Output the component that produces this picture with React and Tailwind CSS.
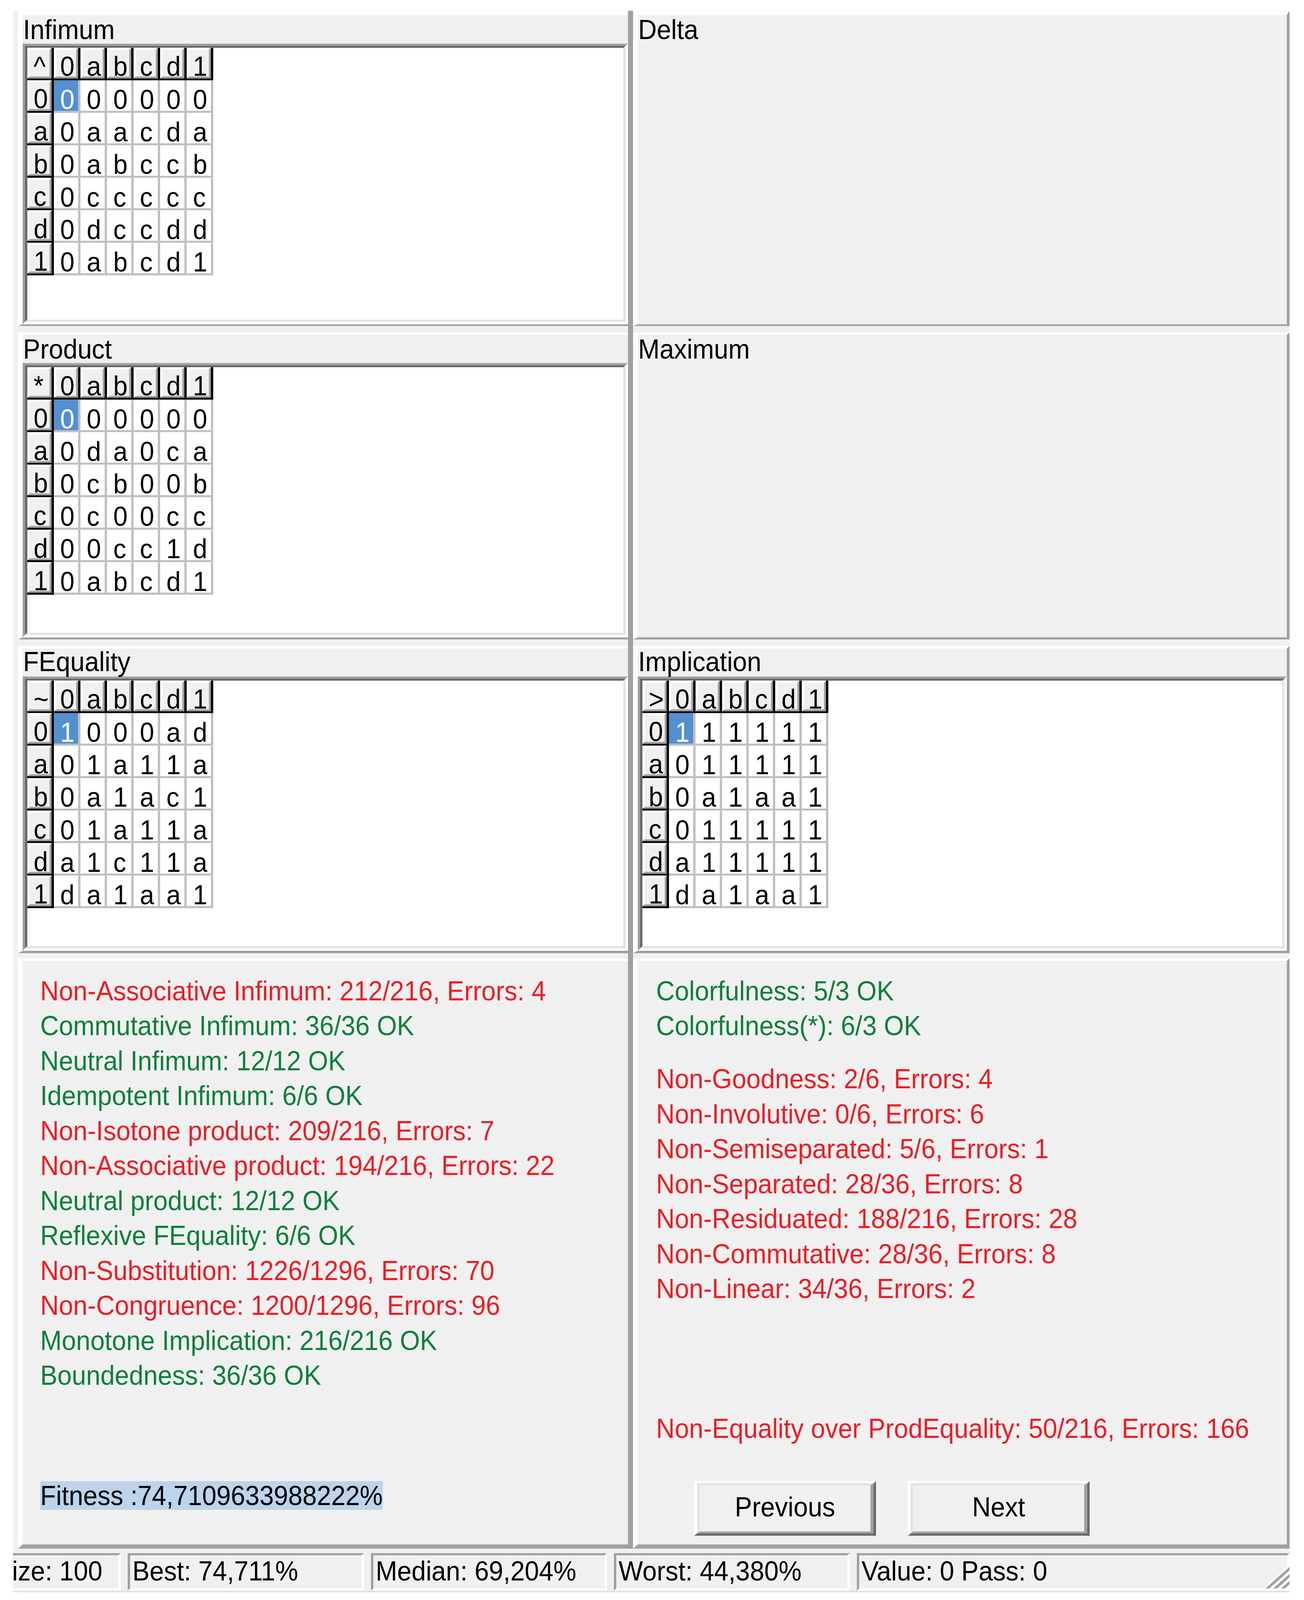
const COLS = ["0", "a", "b", "c", "d", "1"];

const tables = {
  infimum: {
    sym: "^",
    rows: ["000000", "0aacda", "0abccb", "0ccccc", "0dccdd", "0abcd1"],
  },
  product: {
    sym: "*",
    rows: ["000000", "0da0ca", "0cb00b", "0c00cc", "00cc1d", "0abcd1"],
  },
  fequality: {
    sym: "~",
    rows: ["1000ad", "01a11a", "0a1ac1", "01a11a", "a1c11a", "da1aa1"],
  },
  implication: {
    sym: ">",
    rows: ["111111", "011111", "0a1aa1", "011111", "a11111", "da1aa1"],
  },
};

const leftChecks = [
  ["r", "Non-Associative Infimum: 212/216, Errors: 4"],
  ["g", "Commutative Infimum: 36/36 OK"],
  ["g", "Neutral Infimum: 12/12 OK"],
  ["g", "Idempotent Infimum: 6/6 OK"],
  ["r", "Non-Isotone product: 209/216, Errors: 7"],
  ["r", "Non-Associative product: 194/216, Errors: 22"],
  ["g", "Neutral product: 12/12 OK"],
  ["g", "Reflexive FEquality: 6/6 OK"],
  ["r", "Non-Substitution: 1226/1296, Errors: 70"],
  ["r", "Non-Congruence: 1200/1296, Errors: 96"],
  ["g", "Monotone Implication: 216/216 OK"],
  ["g", "Boundedness: 36/36 OK"],
];

const rightChecks = [
  "Non-Goodness: 2/6, Errors: 4",
  "Non-Involutive: 0/6, Errors: 6",
  "Non-Semiseparated: 5/6, Errors: 1",
  "Non-Separated: 28/36, Errors: 8",
  "Non-Residuated: 188/216, Errors: 28",
  "Non-Commutative: 28/36, Errors: 8",
  "Non-Linear: 34/36, Errors: 2",
];

const DESIGN_H = 4579;

// the old MS Sans Serif look is tall and narrow: stretch glyphs up from the baseline
function T({ children }) {
  return <span className="inline-block leading-none whitespace-nowrap origin-[0_56px] scale-y-[1.2]">{children}</span>;
}

function Head({ children }) {
  return (
    <div className="w-[68px] h-[93px] shrink-0 border-r-[6px] border-b-[6px] border-[#050505]">
      <div className="h-full border-l-[6px] border-t-[6px] border-r-[5px] border-b-[5px] border-l-white border-t-white border-r-[#a0a0a0] border-b-[#a0a0a0] bg-[#f0f0f0] pl-[10px] pt-[18px] leading-none">
        <T>{children}</T>
      </div>
    </div>
  );
}

function Cell({ value, selected }) {
  return (
    <div
      className={
        "w-[68px] h-[93px] shrink-0 border-r-[6px] border-b-[6px] border-[#c0c0c0] pl-[16px] pt-[26px] leading-none " +
        (selected ? "bg-[#5390d0] text-white" : "bg-white")
      }
    >
      <T>{value}</T>
    </div>
  );
}

function Grid({ data }) {
  return (
    <div className="flex flex-col w-max">
      <div className="flex">
        <Head>{data.sym}</Head>
        {COLS.map((c) => (
          <Head key={c}>{c}</Head>
        ))}
      </div>
      {data.rows.map((row, i) => (
        <div key={i} className="flex">
          <Head>{COLS[i]}</Head>
          {row.split("").map((v, j) => (
            <Cell key={j} value={v} selected={i === 0 && j === 0} />
          ))}
        </div>
      ))}
    </div>
  );
}

// sunken white box holding a grid
function GridBox({ data }) {
  return (
    <div className="flex-1 flex flex-col border-t-[6px] border-l-[6px] border-r-[6px] border-b-[7px] border-t-[#a0a0a0] border-l-[#a0a0a0] border-r-white border-b-white">
      <div className="flex-1 bg-white border-t-[6px] border-l-[6px] border-r-[6px] border-b-[6px] border-t-[#696969] border-l-[#696969] border-r-[#e3e3e3] border-b-[#e3e3e3]">
        <Grid data={data} />
      </div>
    </div>
  );
}

function Line({ color, children }) {
  return (
    <div className={"h-[100px] leading-[100px] whitespace-nowrap " + (color === "r" ? "text-[#ed1c24]" : "text-[#0b7f3b]")}>
      <T>{children}</T>
    </div>
  );
}

function Button({ children }) {
  return (
    <div className="w-[466px] h-[156px] border-t-[6px] border-l-[8px] border-r-[6px] border-b-[7px] border-t-white border-l-white border-r-[#696969] border-b-[#696969]">
      <div className="h-full flex items-center justify-center bg-[#f0f0f0] border-t-[6px] border-l-[6px] border-r-[8px] border-b-[5px] border-t-[#e3e3e3] border-l-[#e3e3e3] border-r-[#a0a0a0] border-b-[#a0a0a0]">
        <T>{children}</T>
      </div>
    </div>
  );
}

function StatusCell({ className, children }) {
  return (
    <div className={"h-[107px] shrink-0 overflow-hidden border-t-[6px] border-b-[6px] border-r-[6px] border-t-[#a0a0a0] border-l-[#a0a0a0] border-b-white border-r-white pt-[4px] leading-[91px] whitespace-nowrap " + className}>
      {children}
    </div>
  );
}

function Grip() {
  return (
    <svg width="72" height="76" viewBox="0 0 72 76" className="absolute right-0 bottom-[6px]">
      {[0, 20, 40].map((o) => (
        <g key={o}>
          <line x1={o + 6} y1="78" x2="74" y2={o + 10} stroke="#ffffff" strokeWidth="6" />
          <line x1={o + 13} y1="78" x2="74" y2={o + 17} stroke="#a0a0a0" strokeWidth="7" />
        </g>
      ))}
    </svg>
  );
}

const panel = "flex flex-col bg-[#f0f0f0] border-l-[12px] border-l-white border-t-white border-b-[#a0a0a0]";
const rightPanel = panel + " border-r-[7px] border-r-[#a0a0a0]";

export default function App() {
  // the window may be shorter than the design height: squeeze vertically so the whole form stays visible
  const fit = typeof window !== "undefined" ? Math.min(1, window.innerHeight / DESIGN_H) : 1;

  return (
    <div className="w-[3339px] h-screen overflow-hidden bg-white">
      <div
        className="w-[3339px] h-[4579px] origin-top-left bg-white pt-[31px] pl-[33px] text-[66px] text-black font-['Liberation_Sans',Arial,sans-serif]"
        style={{ transform: `scaleY(${fit})` }}
      >
        <div className="w-[3269px] bg-[#f0f0f0] flex flex-col">
          {/* panels */}
          <div className="flex pl-[13px]">
            {/* left column */}
            <div className="w-[1575px] shrink-0 flex flex-col border-r-[13px] border-r-[#a0a0a0]">
              <div className={panel + " h-[902px] border-t-[12px] border-b-[5px]"}>
                <div className="h-[82px] shrink-0 pt-[10px] leading-[72px] pl-px">
                  <T>Infimum</T>
                </div>
                <GridBox data={tables.infimum} />
              </div>
              <div className={panel + " h-[878px] mt-[19px] border-t-[6px] border-b-[6px]"}>
                <div className="h-[81px] shrink-0 pt-[9px] leading-[72px] pl-px">
                  <T>Product</T>
                </div>
                <GridBox data={tables.product} />
              </div>
              <div className={panel + " h-[879px] mt-[19px] border-t-[7px] border-b-[7px]"}>
                <div className="h-[80px] shrink-0 pt-[6px] leading-[72px] pl-px">
                  <T>FEquality</T>
                </div>
                <GridBox data={tables.fequality} />
              </div>
              <div className={panel + " h-[1689px] mt-[15px] border-t-[7px] border-b-[12px] pl-[45px] pt-[40px]"}>
                {leftChecks.map(([c, t]) => (
                  <Line key={t} color={c}>
                    {t}
                  </Line>
                ))}
                <div className="mt-[249px] w-max h-[82px] pt-[8px] leading-[74px] bg-[#bcd4ec] whitespace-nowrap">
                  <T>Fitness :74,7109633988222%</T>
                </div>
              </div>
            </div>

            {/* right column */}
            <div className="flex-1 flex flex-col">
              <div className={rightPanel + " h-[902px] border-t-[12px] border-b-[5px]"}>
                <div className="h-[82px] pt-[10px] leading-[72px] pl-px">
                  <T>Delta</T>
                </div>
              </div>
              <div className={rightPanel + " h-[878px] mt-[19px] border-t-[6px] border-b-[6px]"}>
                <div className="h-[81px] pt-[9px] leading-[72px] pl-px">
                  <T>Maximum</T>
                </div>
              </div>
              <div className={rightPanel + " h-[879px] mt-[19px] border-t-[7px] border-b-[7px]"}>
                <div className="h-[80px] shrink-0 pt-[6px] leading-[72px] pl-px">
                  <T>Implication</T>
                </div>
                <GridBox data={tables.implication} />
              </div>
              <div className={rightPanel + " h-[1689px] mt-[15px] border-t-[7px] border-b-[12px] pl-[47px] pt-[40px]"}>
                <Line color="g">Colorfulness: 5/3 OK</Line>
                <Line color="g">Colorfulness(*): 6/3 OK</Line>
                <div className="mt-[52px]">
                  {rightChecks.map((t) => (
                    <Line key={t} color="r">
                      {t}
                    </Line>
                  ))}
                </div>
                <div className="mt-[300px]">
                  <Line color="r">Non-Equality over ProdEquality: 50/216, Errors: 166</Line>
                </div>
                <div className="mt-[97px] ml-[97px] flex gap-[81px]">
                  <Button>Previous</Button>
                  <Button>Next</Button>
                </div>
              </div>
            </div>
          </div>

          {/* status bar */}
          <div className="mt-[13px] flex gap-[18px] relative">
            <StatusCell className="w-[276px]">
              <span className="inline-block ml-[-46px]">
                <T>Size: 100</T>
              </span>
            </StatusCell>
            <StatusCell className="w-[605px] border-l-[6px] pl-[6px]">
              <T>Best: 74,711%</T>
            </StatusCell>
            <StatusCell className="w-[604px] border-l-[6px] pl-[6px]">
              <T>Median: 69,204%</T>
            </StatusCell>
            <StatusCell className="w-[604px] border-l-[6px] pl-[6px]">
              <T>Worst: 44,380%</T>
            </StatusCell>
            <StatusCell className="flex-1 shrink border-l-[6px] pl-[6px]">
              <T>Value: 0 Pass: 0</T>
            </StatusCell>
            <Grip />
          </div>
          <div className="h-[5px] bg-[#d9e4f1]" />
        </div>
      </div>
    </div>
  );
}
